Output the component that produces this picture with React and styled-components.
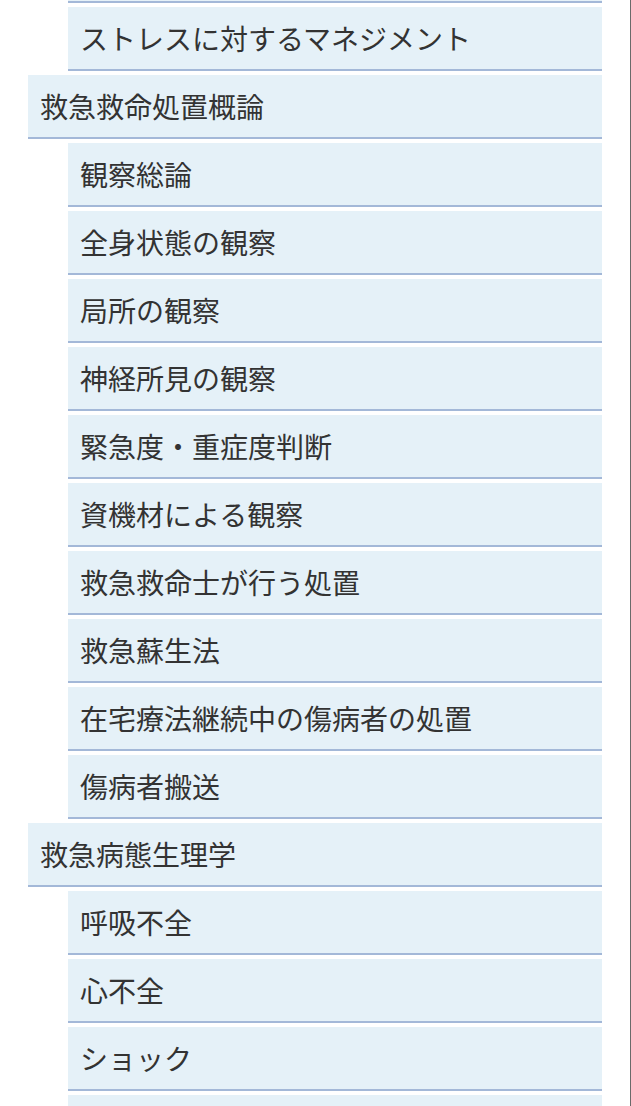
import styled, { createGlobalStyle } from "styled-components";

const GlobalStyle = createGlobalStyle`
    html, body {
        margin: 0;
        padding: 0;
        background: #ffffff;
    }

    body {
        font-family: "Noto Sans CJK JP", "Noto Sans", sans-serif;
        color: #333333;
        overflow: hidden;
    }
`;

const menu = [
    {
        title: null,
        items: ["惨事ストレス", "ストレスに対するマネジメント"],
    },
    {
        title: "救急救命処置概論",
        items: [
            "観察総論",
            "全身状態の観察",
            "局所の観察",
            "神経所見の観察",
            "緊急度・重症度判断",
            "資機材による観察",
            "救急救命士が行う処置",
            "救急蘇生法",
            "在宅療法継続中の傷病者の処置",
            "傷病者搬送",
        ],
    },
    {
        title: "救急病態生理学",
        items: ["呼吸不全", "心不全", "ショック", "重症脳障害"],
    },
];

function App() {
    return (
        <>
            <GlobalStyle />
            <Page>
                <Menu>
                    {menu.map((section, i) => (
                        <Section key={i}>
                            {section.title && <Category href="#">{section.title}</Category>}
                            <SubList>
                                {section.items.map((item) => (
                                    <li key={item}>
                                        <SubLink href="#">{item}</SubLink>
                                    </li>
                                ))}
                            </SubList>
                        </Section>
                    ))}
                </Menu>
            </Page>
        </>
    );
}

const Page = styled.div`
    width: 630px;
    height: 1106px;
    border-right: 1px solid #6a6a6a;
    overflow: hidden;
`;

const Menu = styled.ul`
    list-style: none;
    margin: -61px 0 0;
    padding: 0 28px;
`;

const Section = styled.li`
    margin: 0;
    padding: 0;
`;

const Link = styled.a`
    display: flex;
    align-items: center;
    box-sizing: border-box;
    height: 64px;
    margin-bottom: 4px;
    padding-left: 12px;
    background: #e5f1f8;
    border-bottom: 2px solid #a3b8d8;
    color: #333333;
    font-size: 28px;
    text-decoration: none;
    white-space: nowrap;
`;

const Category = styled(Link)``;

const SubList = styled.ul`
    list-style: none;
    margin: 0;
    padding: 0 0 0 40px;
`;

const SubLink = styled(Link)``;

export default App;
